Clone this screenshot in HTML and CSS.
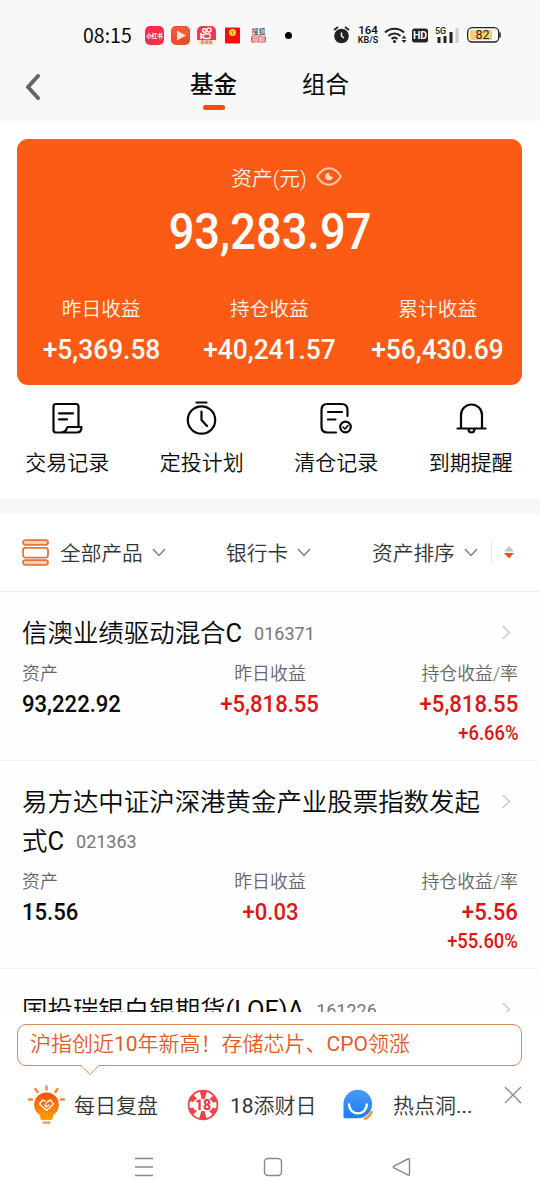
FILE: index.html
```html
<!DOCTYPE html>
<html lang="zh-CN">
<head>
<meta charset="utf-8">
<title>基金</title>
<link rel="stylesheet" href="styles.css">
</head>
<body>
<div class="phone">
  <header class="top">
    <div class="status">
      <span class="clock">08:15</span>
      <div class="apps">
        <svg width="19" height="19" viewBox="0 0 19 19"><rect width="19" height="19" rx="5" fill="#fb2c4c"/><text class="tiny" x="9.5" y="11.700" font-size="5.5" font-weight="700" fill="#fff">小红书</text></svg>
        <svg width="19" height="19" viewBox="0 0 19 19"><rect width="19" height="19" rx="5" fill="#ee4931"/><rect x="1" y="1" width="17" height="10" rx="4" fill="#ee6a37" opacity=".6"/><path d="M6 4.500v10l9-5z" fill="#ffe2d8"/></svg>
        <svg width="19" height="19" viewBox="0 0 19 19"><rect width="19" height="19" rx="5" fill="#f03a51"/><path d="M0 14h19v1a4 4 0 0 1-4 4H4a4 4 0 0 1-4-4z" fill="#fff0d0"/><g fill="none" stroke="#fff" stroke-width="1.400"><circle cx="7.500" cy="4.500" r="1.800"/><circle cx="12" cy="4" r="2.100"/><rect x="6.500" y="8" width="6.500" height="4.500" rx="1"/><path d="M6 9L4 8v4l2-1"/></g><text class="tiny" x="9.500" y="18" font-size="4" fill="#c33">极速版</text></svg>
        <svg width="19" height="19" viewBox="0 0 19 19"><rect x="2" y="1.500" width="15" height="16" rx="1" fill="#f80f0b"/><path d="M2 5q7 6 15 0" stroke="#cc1710" fill="none"/><circle cx="9.500" cy="6.500" r="3.500" fill="#ffd32b"/><path d="M8.300 5l1.200 1.500L10.700 5M9.500 6.500v2" stroke="#d57b00" fill="none"/></svg>
        <svg width="19" height="19" viewBox="0 0 19 19"><rect width="19" height="19" rx="5" fill="#fff"/><text class="tiny" x="9.500" y="8" font-size="7" fill="#222">搜狐</text><rect x="2" y="9.500" width="15" height="7.500" rx="2" fill="#e7586b"/><text class="tiny" x="9.500" y="15.700" font-size="6.500" fill="#fff">视频</text></svg>
      </div>
      <span class="dot"></span>
      <div class="signals">
        <svg width="18" height="18" viewBox="0 0 18 18"><circle cx="8.500" cy="10" r="7.300" fill="#222"/><path d="M1 4l4-3M12 1l4 3" stroke="#222" stroke-width="1.800"/><path d="M8.500 6.500V10l2.500 2" stroke="#fff" stroke-width="1.500" fill="none"/></svg>
        <div class="speed"><span>164</span><span>KB/S</span></div>
        <svg width="23" height="18" viewBox="0 0 23 18" fill="none" stroke="#222"><path d="M1 6.500a14 14 0 0 1 19 0M4.500 10a8.500 8.500 0 0 1 12 0M7.500 13a4.500 4.500 0 0 1 6 0" stroke-width="2"/><circle cx="10.500" cy="15.500" r="1.600" fill="#222" stroke="none"/><path d="M17.500 12.500l2.500-3 2.500 3zM17.500 14l2.500 3 2.500-3z" fill="#222" stroke="none"/></svg>
        <svg width="16" height="15" viewBox="0 0 16 15"><rect y=".5" width="16" height="14" rx="2.500" fill="#222"/><text class="tiny latin" x="8" y="11.200" font-size="10.500" font-weight="700" fill="#fff">HD</text></svg>
        <svg width="24" height="18" viewBox="0 0 24 18"><text class="tiny latin" x="5.500" y="7.500" font-size="9" font-weight="500" fill="#222">5G</text><path d="M4 11v6M10 10v7M16 6v11" stroke="#222" stroke-width="3"/><path d="M22 2v15" stroke="#ccc" stroke-width="3"/></svg>
        <svg width="34" height="16" viewBox="0 0 34 16"><rect x=".7" y=".7" width="31" height="14.300" rx="4.500" fill="#fff" stroke="#222" stroke-width="1.300"/><path d="M3 5q0-2 2-2h20v10H5q-2 0-2-2z" fill="#fbd06c"/><path d="M33 5.500v5" stroke="#222" stroke-width="1.500"/><text class="tiny latin" x="15.500" y="12.400" font-size="12.500" fill="#222">82</text></svg>
      </div>
    </div>
    <nav class="tabs">
      <svg class="back" width="16" height="26" viewBox="0 0 16 26"><path d="M13 2L3 13l10 11" fill="none" stroke="#666" stroke-width="4" stroke-linecap="round" stroke-linejoin="round"/></svg>
      <span class="tab active">基金</span>
      <span class="tab">组合</span>
    </nav>
  </header>

  <section class="card">
    <div class="card-title">资产(元)
      <svg width="26" height="19" viewBox="0 0 26 19"><path d="M1.200 9.500Q6 1.200 13 1.200T24.800 9.500Q20 17.800 13 17.800T1.200 9.500z" fill="none" stroke="#ffc9b0" stroke-width="2"/><path d="M13 5.800a3.800 3.800 0 1 0 3.800 3.800q-3.300.8-3.800-3.800z" fill="#ffd4c2"/></svg>
    </div>
    <div class="total"><span class="num">93,283.97</span></div>
    <div class="gains">
      <div><span>昨日收益</span><b class="num">+5,369.58</b></div>
      <div><span>持仓收益</span><b class="num">+40,241.57</b></div>
      <div><span>累计收益</span><b class="num">+56,430.69</b></div>
    </div>
  </section>

  <section class="quick">
    <div><svg width="34" height="34" viewBox="0 0 34 34"><path d="M11 31.500H6q-2.500 0-2.500-2.500V5.500Q3.500 3 6 3h20q2.500 0 2.500 2.500V25.500M9 12.300h14M9 18.300h8M11 31.500q4 0 5-2.500l1.500-3h14q0 5.500-4.500 5.500z"/></svg><span>交易记录</span></div>
    <div><svg width="34" height="34" viewBox="0 0 34 34"><circle cx="16.500" cy="19" r="13.700"/><path d="M11.500 1.500h10M16.500 10.500V19l5.500 6"/></svg><span>定投计划</span></div>
    <div><svg width="34" height="34" viewBox="0 0 34 34"><path d="M17 31.500H8.500q-6 0-6-6V9q0-6 6-6H22.500q6 0 6 6v6M9 11h14M9 18.500h7.500"/><circle cx="26.500" cy="26" r="5.300"/><path d="M24 26l2 2 3-3.500" stroke-width="1.600"/></svg><span>清仓记录</span></div>
    <div><svg width="34" height="34" viewBox="0 0 34 34"><path d="M3.500 27.500h28M7 27V14a10.500 10.500 0 0 1 21 0V27M14.500 28q0 3.500 3 3.500t3-3.500"/></svg><span>到期提醒</span></div>
  </section>

  <section class="filters">
    <div class="filter">
      <svg class="stack" width="27" height="27" viewBox="0 0 27 27"><g fill="#ffd0a8" stroke="#e07642" stroke-width="1.800"><rect x="1" y="1.200" width="25" height="4.600" rx="2.300"/><rect x="1" y="8.800" width="25" height="9.800" rx="2.500" fill="#fff"/><rect x="1" y="21.200" width="25" height="4.600" rx="2.300"/></g></svg>
      <span>全部产品</span><svg class="down" width="14" height="9" viewBox="0 0 14 9"><path d="M1 1l6 6.500L13 1"/></svg></div>
    <div class="filter"><span>银行卡</span><svg class="down" width="14" height="9" viewBox="0 0 14 9"><path d="M1 1l6 6.500L13 1"/></svg></div>
    <div class="filter"><span>资产排序</span><svg class="down" width="14" height="9" viewBox="0 0 14 9"><path d="M1 1l6 6.500L13 1"/></svg></div>
    <div class="sort"><svg width="10" height="13" viewBox="0 0 10 13"><path d="M0 5.500L5 0l5 5.500z" fill="#c8c8c8"/><path d="M0 7l5 5.500L10 7z" fill="#e55220"/></svg></div>
  </section>

  <main class="funds">
    <article class="fund">
      <div class="fund-head"><h2>信澳业绩驱动混合<span class="en">C</span><small>016371</small></h2><svg class="go" width="10" height="15" viewBox="0 0 10 15"><path d="M1.500 1l7 6.500-7 6.500"/></svg></div>
      <div class="cells">
        <div><span>资产</span><b class="num">93,222.92</b></div>
        <div class="red"><span>昨日收益</span><b class="num">+5,818.55</b></div>
        <div class="red"><span>持仓收益/率</span><b class="num">+5,818.55</b><b class="num rate">+6.66%</b></div>
      </div>
    </article>
    <article class="fund">
      <div class="fund-head"><h2>易方达中证沪深港黄金产业股票指数发起式<span class="en">C</span><small>021363</small></h2><svg class="go" width="10" height="15" viewBox="0 0 10 15"><path d="M1.500 1l7 6.500-7 6.500"/></svg></div>
      <div class="cells">
        <div><span>资产</span><b class="num">15.56</b></div>
        <div class="red"><span>昨日收益</span><b class="num">+0.03</b></div>
        <div class="red"><span>持仓收益/率</span><b class="num">+5.56</b><b class="num rate">+55.60%</b></div>
      </div>
    </article>
    <article class="fund">
      <div class="fund-head"><h2>国投瑞银白银期货<span class="en">(LOF)A</span><small>161226</small></h2><svg class="go" width="10" height="15" viewBox="0 0 10 15"><path d="M1.500 1l7 6.500-7 6.500"/></svg></div>
    </article>
  </main>

  <section class="promo">
    <div class="bubble">沪指创近<span class="en">10</span>年新高！存储芯片、<span class="en">CPO</span>领涨
      <svg class="tail" width="20" height="11" viewBox="0 0 20 11"><path d="M1 0h18L10 9.500z" fill="#fff"/><path d="M1 .5l9 9 9-9" fill="none" stroke="#dc8052"/></svg>
    </div>
    <div class="links">
      <svg width="38" height="40" viewBox="0 0 38 40"><defs><linearGradient id="bulb" x2="0" y2="1"><stop stop-color="#f9500e"/><stop offset="1" stop-color="#ffa000"/></linearGradient></defs><path d="M19.500 7.500a12.300 12.300 0 0 0-7 22.500l1.500 5h11l1.500-5a12.300 12.300 0 0 0-7-22.500z" fill="url(#bulb)"/><path d="M16.500 37.700h6" stroke="#ed9a38" stroke-width="2.200" stroke-linecap="round"/><path d="M19.500 1.500v3M8.500 4l2 3M30.500 4l-2 3M2 14.500h3M34 14.500h3" stroke="#f58a38" stroke-width="2.400" stroke-linecap="round"/><path d="M18.500 16.500l-3-1.500-3 4 7 6.500 7-6.500-3-4-3 1.500-2.500 4 1.500 1.500 3-2.500" fill="none" stroke="#fff3e0" stroke-width="1.400" stroke-linejoin="round"/></svg>
      <span class="label l1">每日复盘</span>
      <svg width="32" height="32" viewBox="0 0 32 32"><circle cx="16" cy="16" r="15.300" fill="#ed4548"/><circle cx="16" cy="16" r="9" fill="none" stroke="#fff" stroke-width="9" stroke-dasharray="4.700 4.725" stroke-dashoffset="2.350"/><rect x="6" y="10" width="20" height="12" rx="5" fill="#fff"/><text class="tiny latin" x="16" y="21" font-size="14" font-weight="900" fill="#e73e42">18</text></svg>
      <span class="label l2"><span class="en">18</span>添财日</span>
      <svg width="32" height="32" viewBox="0 0 32 32"><defs><linearGradient id="chat" x2="0" y2="1"><stop stop-color="#4a9af8"/><stop offset="1" stop-color="#1f7cf3"/></linearGradient></defs><path d="M2.500 28V15A14.300 14.300 0 1 1 16.800 29.300H3.500q-1 0-1-1.300z" fill="url(#chat)"/><path d="M8 15.500a8.900 8.900 0 0 0 17.800 0" fill="none" stroke="#fff" stroke-width="2.400" stroke-linecap="round"/><path d="M23 30q5.500-1.500 8-8" fill="none" stroke="#f3952d" stroke-width="2.600"/></svg>
      <span class="label l3">热点洞<span class="en">...</span></span>
      <svg class="close" width="18" height="18" viewBox="0 0 18 18"><path d="M1 1l16 16M17 1L1 17" stroke="#888" stroke-width="1.300"/></svg>
    </div>
  </section>
  <footer class="sysnav">
    <svg width="20" height="20" viewBox="0 0 20 20"><path d="M1 1.500h18M1 10h18M1 18.500h18"/></svg>
    <svg width="20" height="20" viewBox="0 0 20 20"><rect x="1.500" y="1.500" width="17" height="17" rx="3.500"/></svg>
    <svg width="20" height="20" viewBox="0 0 20 20"><path d="M17.500 3v14q0 1.800-1.600.9L2 11q-1.500-1 0-2L15.900 2q1.600-.8 1.600 1z"/></svg>
  </footer>
</div>
</body>
</html>
```
FILE: styles.css
```css
* { box-sizing: border-box; }
body { margin: 0; background: #fff; color: #080808; font-family: Roboto, "Noto Sans CJK SC", sans-serif; }
svg { display: block; flex: none; }
.phone { width: 540px; height: 1200px; overflow: hidden; display: flex; flex-direction: column; }
.phone > * { flex: none; }
.tiny { text-anchor: middle; font-family: "Noto Sans CJK SC", sans-serif; }
.latin { font-family: Roboto, sans-serif; }
.en { font-weight: 400; }
.num { font-family: Roboto, sans-serif; font-weight: 500; display: inline-block; transform: scaleX(.94); white-space: nowrap; }

.top { height: 121px; background: #f8f8f8; }
.status { height: 60px; padding: 10px 0 0 83px; display: flex; align-items: center; }
.clock { width: 62px; font: 19.500px "Noto Sans CJK SC", sans-serif; line-height: 30px; white-space: nowrap; }
.apps { display: flex; gap: 7px; }
.dot { width: 7px; height: 7px; border-radius: 50%; background: #000; margin: 0 41px 0 17px; }
.signals { display: flex; align-items: center; }
.speed { width: 24px; margin: 0 4px 0 5px; display: flex; flex-direction: column; align-items: center; font-size: 11.500px; line-height: 10px; font-weight: 500; }
.speed span:last-child { font-size: 9px; }
.signals svg:nth-of-type(2) { margin-right: 5px; }
.signals svg:nth-of-type(3) { margin-right: 7px; }
.signals svg:nth-of-type(4) { margin-right: 8px; }
.tabs { height: 61px; display: flex; align-items: flex-start; padding-left: 25px; }
.back { margin: 14px 149px 0 0; }
.tab { width: 47px; margin-right: 65px; font-size: 23.500px; line-height: 36px; padding-top: 7px; white-space: nowrap; }
.active { font-weight: 500; }
.active::after { content: ""; display: block; width: 22px; height: 5px; margin: 2px auto 0; border-radius: 3px; background: #fe4a05; }

.card { width: 505px; height: 246px; margin: 18px 0 0 17px; padding-top: 22px; border-radius: 11px; background: #fb5b15; color: #fff; }
.card-title { display: flex; justify-content: center; align-items: center; gap: 9px; height: 31px; font-size: 20.700px; font-weight: 350; padding-left: 34px; color: #fff3ec; white-space: nowrap; }
.total { text-align: center; height: 77px; line-height: 80px; font-size: 50px; }
.total .num { transform: scaleX(.905); }
.gains { display: flex; }
.gains div { width: 168.300px; display: flex; flex-direction: column; align-items: center; }
.gains span { font-size: 19.700px; line-height: 30px; font-weight: 350; margin-top: 26px; color: #fff3ec; }
.gains .num { font-size: 28px; line-height: 34px; margin-top: 8px; }

.quick { height: 114px; display: flex; padding-top: 16px; }
.quick div { width: 134.500px; display: flex; flex-direction: column; align-items: center; gap: 11px; font-size: 21px; line-height: 34px; font-weight: 350; }
.quick svg { fill: none; stroke: #080808; stroke-width: 2.200; stroke-linecap: round; stroke-linejoin: round; }

.filters { height: 93px; border-top: 15px solid #f7f7f7; border-bottom: 1px solid #f0f0f0; display: flex; align-items: center; color: #333; font-size: 20.700px; font-weight: 350; padding-left: 22px; }
.filter { display: flex; align-items: center; white-space: nowrap; }
.filter span { padding-bottom: 2px; }
.filter:nth-child(1) { width: 204px; }
.filter:nth-child(2) { width: 146px; }
.filter:nth-child(3) { width: 119px; }
.stack { margin-right: 11px; }
.down { margin-left: 9px; fill: none; stroke: #808080; stroke-width: 1.400; }
.sort { border-left: 1px solid #e6e6e6; height: 23px; padding: 5px 0 0 12px; }

.funds { height: 420px; overflow: hidden; background: #fefefe; }
.fund { padding: 22px 22px 12px; border-bottom: 1px solid #f6f6f6; }
.fund-head { display: flex; justify-content: space-between; padding-right: 7px; }
h2 { margin: 0; width: 466px; font-size: 25.450px; font-weight: 350; line-height: 39px; }
small { font-size: 18px; font-weight: 400; line-height: 0; vertical-align: 2px; color: #777; margin-left: 12px; }
.go { margin-top: 11px; fill: none; stroke: #c8c8c8; stroke-width: 1.300; }
.cells { margin-top: 7px; display: grid; grid-template-columns: 165px 166px 165px; height: 88px; }
.cells div { display: flex; flex-direction: column; align-items: flex-start; }
.cells div:nth-child(2) { align-items: center; }
.cells div:nth-child(3) { align-items: flex-end; }
.cells span { font-size: 17.900px; line-height: 28px; font-weight: 350; color: #666; }
.cells .num { font-size: 24px; line-height: 32px; transform: scaleX(.92); transform-origin: left; }
.cells div:nth-child(2) .num { transform-origin: center; }
.cells div:nth-child(3) .num { transform-origin: right; }
.red .num { color: #dc1515; }
.cells .rate { font-size: 20px; line-height: 26px; }

.promo { height: 122px; padding: 12px 18px 0 17px; background: #fff; }
.bubble { position: relative; height: 42px; border: 1px solid #d9895f; border-radius: 9px; padding-left: 12px; font-size: 21px; line-height: 39px; font-weight: 350; color: #e05c28; white-space: nowrap; }
.tail { position: absolute; left: 62px; top: 40px; }
.links { display: flex; align-items: center; height: 78px; margin-left: 10px; font-size: 21px; font-weight: 350; color: #333; white-space: nowrap; }
.label { padding-bottom: 2px; }
.l1 { width: 113px; margin-left: 9px; }
.l2 { width: 111px; margin-left: 11px; }
.l3 { width: 111px; margin-left: 20px; }
.close { margin-top: -21px; }
.sysnav { height: 66px; display: flex; gap: 109px; padding: 23px 0 0 134px; }
.sysnav svg { fill: none; stroke: #888; stroke-width: 1.400; }
```
